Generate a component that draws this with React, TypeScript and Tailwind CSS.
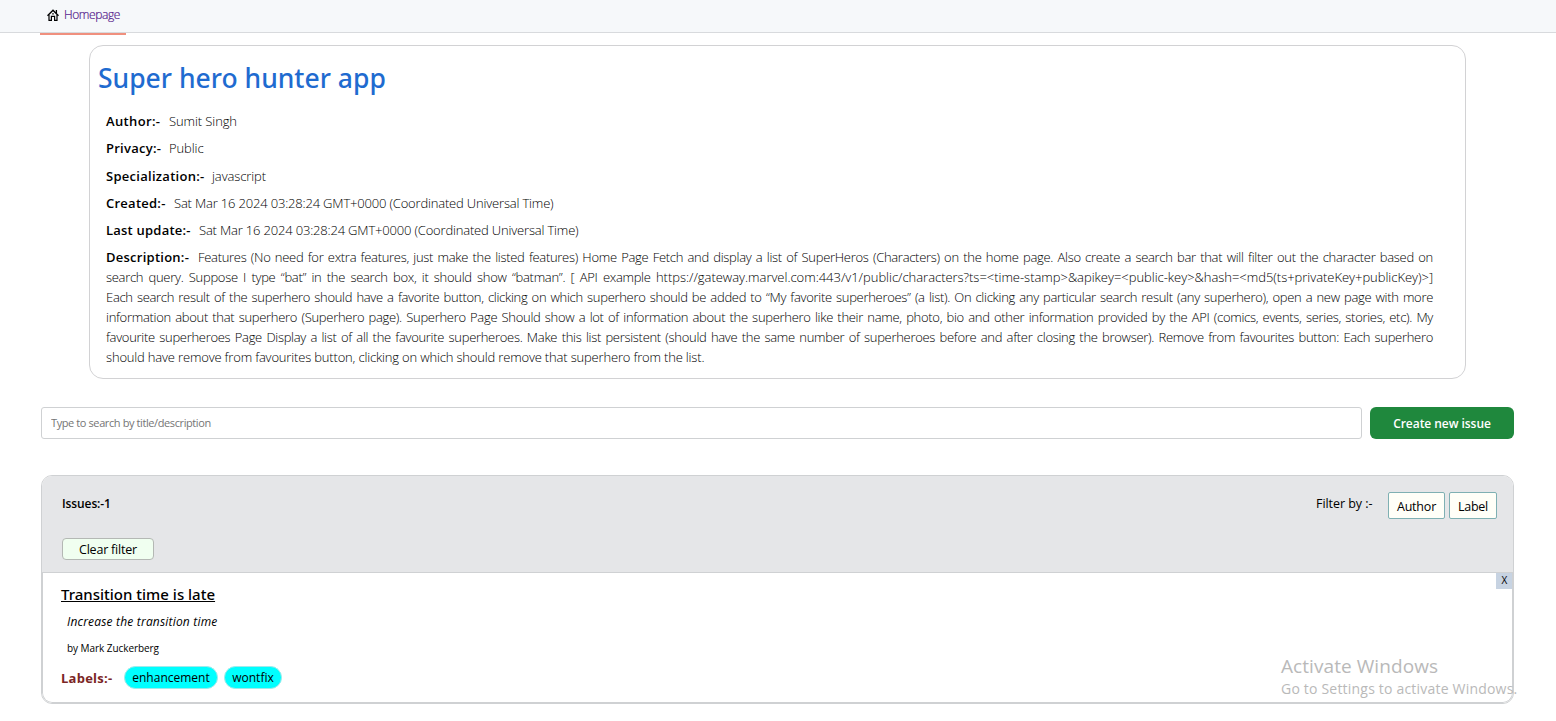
import React from "react";

const details = [
  { label: "Author:-", value: "Sumit Singh", width: "w-[63px]", labelTracking: "tracking-[0.35px]", tracking: "tracking-[-0.1px]" },
  { label: "Privacy:-", value: "Public", width: "w-[63px]", labelTracking: "tracking-[0.25px]", tracking: "tracking-[-0.1px]" },
  { label: "Specialization:-", value: "javascript", width: "w-[106px]", labelTracking: "tracking-[0.28px]", tracking: "tracking-[-0.1px]" },
  { label: "Created:-", value: "Sat Mar 16 2024 03:28:24 GMT+0000 (Coordinated Universal Time)", width: "w-[68px]", labelTracking: "tracking-[0.25px]", tracking: "tracking-[-0.18px]" },
  { label: "Last update:-", value: "Sat Mar 16 2024 03:28:24 GMT+0000 (Coordinated Universal Time)", width: "w-[93px]", labelTracking: "tracking-[0.22px]", tracking: "tracking-[-0.18px]" },
];

const apiExample =
  "https://gateway.marvel.com:443/v1/public/characters?ts=<time-stamp>&apikey=<public-key>&hash=<md5(ts+privateKey+publicKey)>]";

const descriptionLines: React.ReactNode[] = [
  "Features (No need for extra features, just make the listed features) Home Page Fetch and display a list of SuperHeros (Characters) on the home page. Also create a search bar that will filter out the character based on",
  <>
    search query. Suppose I type “bat” in the search box, it should show “batman”. [ API example <span className="tracking-[-0.03px]">{apiExample}</span>
  </>,
  "Each search result of the superhero should have a favorite button, clicking on which superhero should be added to “My favorite superheroes” (a list). On clicking any particular search result (any superhero), open a new page with more",
  "information about that superhero (Superhero page). Superhero Page Should show a lot of information about the superhero like their name, photo, bio and other information provided by the API (comics, events, series, stories, etc). My",
  "favourite superheroes Page Display a list of all the favourite superheroes. Make this list persistent (should have the same number of superheroes before and after closing the browser). Remove from favourites button: Each superhero",
];

function HomeIcon() {
  return (
    <svg viewBox="0 0 12 12" className="mt-1 h-3 w-3 shrink-0" fill="none" stroke="#000">
      <path d="M0.5 6.8 6 1.3 11.5 6.8" strokeWidth="1.5" />
      <path d="M9.4 1v3" strokeWidth="1.3" />
      <path d="M2 6v5.3h2.4V7.4h3.2v3.9H10V6" strokeWidth="1.2" />
      <path d="M5 4.9h2" strokeWidth="1" />
    </svg>
  );
}

export default function App() {
  return (
    <div className="h-[721px] overflow-hidden bg-white font-['Open_Sans','Noto_Sans',sans-serif] text-[13px] leading-5 text-black">
      <nav className="flex h-[33px] border-b border-[#d8dadd] bg-[#f6f8fa] pl-10">
        <a className="flex h-[35px] w-[86px] items-start gap-[5px] border-b-2 border-[#f0907e] pl-[7px] pt-[5px] text-[#551a8b]">
          <HomeIcon />
          <span className="whitespace-nowrap text-[12px] font-light tracking-[-0.4px] [-webkit-text-stroke:0.2px_#551a8b]">Homepage</span>
        </a>
      </nav>

      <section className="ml-[89px] mt-3 h-[334px] w-[1377px] rounded-[14px] border border-[#d2d2d4] pl-2">
        <h1 className="h-[65px] whitespace-nowrap pt-[13px] font-['Noto_Sans','Open_Sans',sans-serif] text-[26.5px] font-medium leading-[38px] text-[#1f6bd0]">Super hero hunter app</h1>
        <div className="flex flex-col gap-[7.25px] pl-2">
          {details.map((d) => (
            <div key={d.label} className="flex whitespace-nowrap">
              <span className={`shrink-0 font-semibold ${d.width} ${d.labelTracking}`}>{d.label}</span>
              <span className={`font-light ${d.tracking}`}>{d.value}</span>
            </div>
          ))}
          <div className="w-[1327px] font-light">
            {descriptionLines.map((line, i) => (
              <div key={i} className="flex whitespace-nowrap">
                {i === 0 && <span className="w-[92px] shrink-0 font-semibold tracking-[0.25px]">Description:-</span>}
                <p className="grow text-justify tracking-[-0.3px] [text-align-last:justify]">{line}</p>
              </div>
            ))}
            <p className="tracking-[-0.175px]">should have remove from favourites button, clicking on which should remove that superhero from the list.</p>
          </div>
        </div>
      </section>

      <div className="ml-[41px] mt-7 flex h-8 w-[1473px] gap-2">
        <input
          className="h-8 w-[1321px] rounded-[3px] border border-[#cfd1d3] px-[9px] pb-0.5 text-[11px] tracking-[-0.4px] placeholder:text-[#757575]"
          placeholder="Type to search by title/description"
        />
        <button className="h-8 w-36 whitespace-nowrap rounded-md bg-[#1f883d] pt-px text-[12px] font-semibold tracking-[-0.05px] text-white">Create new issue</button>
      </div>

      <main className="ml-[41px] mt-9 h-[229px] w-[1473px] overflow-hidden rounded-[11px] border border-[#cfd1d3]">
        <header className="flex h-[97px] justify-between border-b border-[#cfd1d3] bg-[#e5e6e8] pl-5 pr-4">
          <div className="pt-[18px]">
            <h2 className="text-[12px] font-semibold tracking-[-0.1px]">Issues:-1</h2>
            <button className="mt-6 flex h-[22px] w-[92px] items-center justify-center rounded-[4px] border border-[#b4b8b4] bg-[#f0fff0] pt-0.5 text-[12.5px] tracking-[-0.2px]">Clear filter</button>
          </div>
          <div className="flex whitespace-nowrap pt-4">
            <span className="mr-4 mt-0.5 w-14 text-[12.5px] tracking-[-0.05px]">Filter by :-</span>
            <button className="mr-1 h-[27px] w-[57px] rounded-[2px] border border-[#7fb0b3] bg-[#fffff8] pt-0.5 text-[12.5px] tracking-[-0.2px]">Author</button>
            <button className="h-[27px] w-12 rounded-[2px] border border-[#7fb0b3] bg-[#fffff8] pt-0.5 text-[12.5px] tracking-[-0.3px]">Label</button>
          </div>
        </header>
        <article className="flex h-[130px] justify-between rounded-b-[10px] border-x border-b border-[#cfd1d3] bg-white">
          <div className="whitespace-nowrap pl-[18px] pt-[11px]">
            <h3 className="font-['Noto_Sans','Open_Sans',sans-serif] text-[15px] font-medium underline">Transition time is late</h3>
            <p className="ml-1.5 mt-2 text-[12px] italic tracking-[0.19px]">Increase the transition time</p>
            <p className="ml-1.5 mt-1.5 text-[10px] tracking-[-0.06px]">by Mark Zuckerberg</p>
            <div className="mt-2 flex items-center">
              <span className="w-[63px] font-bold tracking-[0.25px] text-[#7b2525]">Labels:-</span>
              <span className="mr-1.5 flex h-[23px] w-[94px] items-center justify-center rounded-full border border-[#9feaea] bg-[#00ffff] text-[12px]">enhancement</span>
              <span className="flex h-[23px] w-[58px] items-center justify-center rounded-full border border-[#9feaea] bg-[#00ffff] text-[12px]">wontfix</span>
            </div>
          </div>
          <button className="flex h-4 w-4 items-center justify-center bg-[#c7d3e2] pb-0.5 pl-px text-[10px]">X</button>
        </article>
      </main>

      <div className="pointer-events-none absolute left-[1281px] top-[654px] whitespace-nowrap text-[#b9b9b9]">
        <p className="text-[19px] leading-6 tracking-[0.07px]">Activate Windows</p>
        <p className="text-[14px] leading-[22px] tracking-[0.2px]">Go to Settings to activate Windows.</p>
      </div>
    </div>
  );
}
